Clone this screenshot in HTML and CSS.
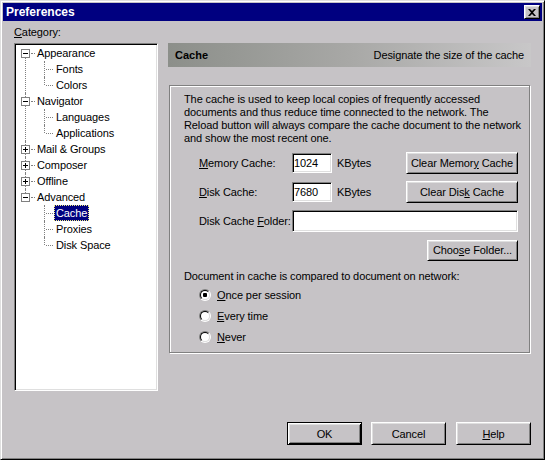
FILE: index.html
```html
<html>
<head>
    <title>Preferences</title>
    <link rel="stylesheet" href="styles.css">
</head>
<body>
    <div class="window">
        <div class="titlebar">
            <span class="title">Preferences</span>
            <button class="close-btn">
                <svg width="8" height="7" viewBox="0 0 8 7"><path d="M0 0h2l2 2 2-2h2L5 3.5 8 7H6L4 5 2 7H0l3-3.5z" fill="#000"/></svg>
            </button>
        </div>

        <div class="main">
            <div class="sidebar">
                <div class="category-label"><u>C</u>ategory:</div>
                <div class="tree-box">
                    <ul class="tree">
                        <li class="node">
                            <div class="row"><span class="toggle minus"></span><span class="dash"></span><span class="label">Appearance</span></div>
                            <ul class="children">
                                <li><span class="label">Fonts</span></li>
                                <li><span class="label">Colors</span></li>
                            </ul>
                        </li>
                        <li class="node">
                            <div class="row"><span class="toggle minus"></span><span class="dash"></span><span class="label">Navigator</span></div>
                            <ul class="children">
                                <li><span class="label">Languages</span></li>
                                <li><span class="label">Applications</span></li>
                            </ul>
                        </li>
                        <li class="node">
                            <div class="row"><span class="toggle plus"></span><span class="dash"></span><span class="label">Mail &amp; Groups</span></div>
                        </li>
                        <li class="node">
                            <div class="row"><span class="toggle plus"></span><span class="dash"></span><span class="label">Composer</span></div>
                        </li>
                        <li class="node">
                            <div class="row"><span class="toggle plus"></span><span class="dash"></span><span class="label">Offline</span></div>
                        </li>
                        <li class="node">
                            <div class="row"><span class="toggle minus"></span><span class="dash"></span><span class="label">Advanced</span></div>
                            <ul class="children">
                                <li><span class="label selected">Cache</span></li>
                                <li><span class="label">Proxies</span></li>
                                <li><span class="label">Disk Space</span></li>
                            </ul>
                        </li>
                    </ul>
                </div>
            </div>

            <div class="pane">
                <div class="pane-header">
                    <span class="pane-title">Cache</span>
                    <span>Designate the size of the cache</span>
                </div>

                <div class="group">
                    <p class="description">
                        The cache is used to keep local copies of frequently accessed<br>
                        documents and thus reduce time connected to the network. The<br>
                        Reload button will always compare the cache document to the network<br>
                        and show the most recent one.
                    </p>

                    <div class="cache-grid">
                        <label><u>M</u>emory Cache:</label>
                        <input class="field" type="text" value="1024">
                        <span class="unit">KBytes</span>
                        <button class="btn wide">Clear Memor<u>y</u> Cache</button>

                        <label><u>D</u>isk Cache:</label>
                        <input class="field" type="text" value="7680">
                        <span class="unit">KBytes</span>
                        <button class="btn wide">Clear Dis<u>k</u> Cache</button>

                        <label>Disk Cache <u>F</u>older:</label>
                        <input class="field folder" type="text" value="">

                        <button class="btn choose">Choo<u>s</u>e Folder...</button>
                    </div>

                    <p class="compare-text">Document in cache is compared to document on network:</p>
                    <div class="radio-row"><span class="radio checked"></span><span><u>O</u>nce per session</span></div>
                    <div class="radio-row"><span class="radio"></span><span><u>E</u>very time</span></div>
                    <div class="radio-row"><span class="radio"></span><span><u>N</u>ever</span></div>
                </div>
            </div>
        </div>

        <div class="footer">
            <button class="btn dialog-btn default">OK</button>
            <button class="btn dialog-btn">Cancel</button>
            <button class="btn dialog-btn help"><u>H</u>elp</button>
        </div>
    </div>
</body>
</html>
```

FILE: styles.css
```css
body {
    margin: 0;
    background: #fff;
    font-family: "Liberation Sans", Arial, sans-serif;
    font-size: 11px;
    letter-spacing: -0.1px;
    color: #000;
}
u {
    text-decoration: underline;
    text-underline-offset: 1px;
}

/* Window frame */
.window {
    width: 545px;
    height: 460px;
    box-sizing: border-box;
    display: flex;
    flex-direction: column;
    padding: 2px;
    background: #c6c3c6;
    border: 1px solid;
    border-color: #dfdfdf #000 #000 #dfdfdf;
    box-shadow: inset 1px 1px #fff, inset -1px -1px #808080;
}
.titlebar {
    height: 18px;
    flex: none;
    display: flex;
    align-items: center;
    justify-content: space-between;
    padding: 0 2px 0 3px;
    background: #000080;
    color: #fff;
    font-size: 12px;
    font-weight: bold;
    letter-spacing: 0;
}
.close-btn {
    width: 16px;
    height: 14px;
    box-sizing: border-box;
    padding: 0;
    display: flex;
    align-items: center;
    justify-content: center;
    background: #c6c3c6;
    border: 1px solid;
    border-color: #fff #000 #000 #fff;
    box-shadow: inset 1px 1px #dfdfdf, inset -1px -1px #808080;
}

.main {
    display: flex;
    gap: 10px;
    padding: 0 11px;
}

/* Category tree */
.sidebar {
    width: 144px;
    flex: none;
}
.category-label {
    height: 22px;
    line-height: 22px;
}
.tree-box {
    height: 348px;
    box-sizing: border-box;
    padding: 1px;
    background: #fff;
    border: 1px solid;
    border-color: #808080 #fff #fff #808080;
    box-shadow: inset 1px 1px #000, inset -1px -1px #dfdfdf;
}
.tree, .children {
    list-style: none;
    margin: 0;
    padding: 0;
}
.tree > li {
    position: relative;
}
.tree > li::before {
    content: '';
    position: absolute;
    left: 9px;
    top: 0;
    bottom: 0;
    border-left: 1px dotted #808080;
}
.tree > li:first-child::before {
    top: 8px;
}
.tree > li:last-child::before {
    bottom: auto;
    height: 8px;
}
.row {
    display: flex;
    align-items: center;
    height: 16px;
}
.toggle {
    position: relative;
    z-index: 1;
    width: 9px;
    height: 9px;
    box-sizing: border-box;
    margin-left: 5px;
    border: 1px solid #808080;
    background: #fff;
}
.toggle::before {
    content: '';
    position: absolute;
    left: 1px;
    top: 3px;
    width: 5px;
    height: 1px;
    background: #000;
}
.toggle.plus::after {
    content: '';
    position: absolute;
    left: 3px;
    top: 1px;
    width: 1px;
    height: 5px;
    background: #000;
}
.dash {
    width: 4px;
    margin-left: 1px;
    border-top: 1px dotted #808080;
}
.label {
    display: inline-block;
    height: 16px;
    line-height: 16px;
    padding: 0 2px;
    white-space: nowrap;
}
.children li {
    position: relative;
    height: 16px;
    padding-left: 38px;
}
.children li::before {
    content: '';
    position: absolute;
    left: 28px;
    top: 0;
    height: 16px;
    border-left: 1px dotted #808080;
}
.children li:last-child::before {
    height: 8px;
}
.children li::after {
    content: '';
    position: absolute;
    left: 30px;
    top: 8px;
    width: 7px;
    border-top: 1px dotted #808080;
}
.label.selected {
    background: #000080;
    color: #fff;
    outline: 1px dotted #f0f080;
    outline-offset: -1px;
}

/* Right pane */
.pane {
    flex: 1;
    padding-top: 22px;
}
.pane-header {
    height: 24px;
    display: flex;
    align-items: center;
    justify-content: space-between;
    padding: 0 7px;
    background: linear-gradient(to right, #8c8f8a, #a8a8a6 50%, #c8c7c8);
}
.pane-title {
    font-weight: bold;
    letter-spacing: 0;
}
.group {
    height: 268px;
    box-sizing: border-box;
    margin: 18px 1px 0 1px;
    padding: 7px 0 0 14px;
    border: 1px solid #808080;
    box-shadow: 1px 1px 0 #fff, inset 1px 1px 0 #fff;
}
.description {
    margin: 0;
    line-height: 13px;
    white-space: nowrap;
}
.cache-grid {
    display: grid;
    grid-template-columns: 93px 40px 74px 112px;
    grid-auto-rows: 22px;
    row-gap: 7px;
    align-items: center;
    margin: 7px 0 0 15px;
}
.cache-grid label {
    white-space: nowrap;
}
.unit {
    padding-left: 5px;
}
.field {
    height: 20px;
    width: 100%;
    box-sizing: border-box;
    padding: 0 1px;
    font-family: inherit;
    font-size: 11px;
    letter-spacing: -0.1px;
    color: #000;
    background: #fff;
    border: 1px solid;
    border-color: #808080 #fff #fff #808080;
    box-shadow: inset 1px 1px #000, inset -1px -1px #dfdfdf;
    outline: none;
}
.field.folder {
    grid-column: 2 / -1;
    height: 22px;
}
.btn {
    box-sizing: border-box;
    padding: 0;
    font-family: inherit;
    font-size: 11px;
    letter-spacing: -0.1px;
    color: #000;
    background: #c6c3c6;
    border: 1px solid;
    border-color: #fff #000 #000 #fff;
    box-shadow: inset 1px 1px #dfdfdf, inset -1px -1px #808080;
}
.btn.wide {
    height: 22px;
}
.btn.choose {
    grid-column: 1 / -1;
    justify-self: end;
    width: 91px;
    height: 21px;
}
.compare-text {
    margin: 9px 0 1px;
    line-height: 13px;
}
.radio-row {
    display: flex;
    align-items: center;
    height: 21px;
    padding-left: 15px;
}
.radio {
    width: 12px;
    height: 12px;
    flex: none;
    box-sizing: border-box;
    margin-right: 6px;
    border-radius: 50%;
    border: 1px solid;
    border-color: #808080 #fff #fff #808080;
}
.radio::before {
    content: '';
    display: block;
    width: 10px;
    height: 10px;
    box-sizing: border-box;
    border-radius: 50%;
    border: 1px solid;
    border-color: #000 #dfdfdf #dfdfdf #000;
    background: #fff;
}
.radio.checked::before {
    background: radial-gradient(circle, #000 2px, #fff 2.5px);
}

/* Dialog buttons */
.footer {
    margin-top: auto;
    display: flex;
    justify-content: flex-end;
    gap: 9px;
    padding: 0 11px 12px;
}
.dialog-btn {
    width: 75px;
    height: 23px;
}
.dialog-btn.default {
    border-color: #000;
    box-shadow: inset 1px 1px #fff, inset -1px -1px #000, inset 2px 2px #dfdfdf, inset -2px -2px #808080;
}
.dialog-btn.help {
    margin-left: 1px;
}
```
